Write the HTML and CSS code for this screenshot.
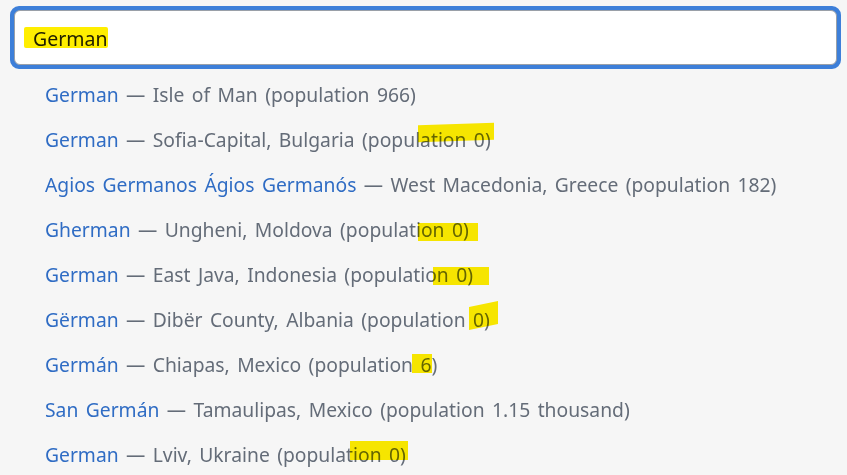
FILE: index.html
```html
<!DOCTYPE html>
<html>
<head>
<meta charset="utf-8">
<link rel="stylesheet" href="styles.css">
</head>
<body>
<div class="page">
  <div class="search">
    <div class="field"><span class="query">German</span></div>
  </div>
  <ul class="results">
    <li><span class="name">German</span> — Isle of Man (population 966)</li>
    <li><span class="name">German</span> — Sofia-Capital, Bulgaria (population 0)</li>
    <li><span class="name">Agios Germanos Ágios Germanós</span> — West Macedonia, Greece (population 182)</li>
    <li><span class="name">Gherman</span> — Ungheni, Moldova (population 0)</li>
    <li><span class="name">German</span> — East Java, Indonesia (population 0)</li>
    <li><span class="name">Gërman</span> — Dibër County, Albania (population 0)</li>
    <li><span class="name">Germán</span> — Chiapas, Mexico (population 6)</li>
    <li><span class="name">San Germán</span> — Tamaulipas, Mexico (population 1.15 thousand)</li>
    <li><span class="name">German</span> — Lviv, Ukraine (population 0)</li>
  </ul>
  <span class="mark m1"></span>
  <span class="mark m2"></span>
  <span class="mark m3"></span>
  <span class="mark m4"></span>
  <span class="mark m5"></span>
  <span class="mark m6"></span>
  <span class="mark m7"></span>
</div>
</body>
</html>
```

FILE: styles.css
```css
html, body {
  margin: 0;
  padding: 0;
  background: #f6f6f6;
}
.page {
  position: relative;
  width: 847px;
  height: 475px;
  overflow: hidden;
  padding: 6px 6px 0 10px;
  box-sizing: border-box;
  font-family: "Noto Sans", "Open Sans", sans-serif;
}
.search {
  width: 831px;
  height: 63px;
  box-sizing: border-box;
  border: 3px solid #3d7fd9;
  border-radius: 9px;
  padding: 1px;
  background: #3d7fd9;
}
.field {
  height: 100%;
  box-sizing: border-box;
  background: #fff;
  border: 1px solid #9aa0a8;
  border-radius: 6px;
  display: flex;
  align-items: center;
  padding-left: 18px;
}
.query {
  font-size: 19.5px;
  color: #222;
  position: relative;
  top: 1px;
}
.results {
  list-style: none;
  margin: 0;
  padding: 13px 0 0 35px;
}
.results li {
  height: 45px;
  line-height: 26px;
  font-size: 19.3px;
  word-spacing: 2.4px;
  color: #646c78;
  white-space: nowrap;
}
.name {
  color: #2f6cc4;
}
.mark {
  position: absolute;
  background: #ffee00;
  mix-blend-mode: multiply;
}
.m1 { left: 24px; top: 27px; width: 84px; height: 21px; border-radius: 2px; }
.m2 { left: 418px; top: 124px; width: 76px; height: 17px; transform: skewY(-2deg); }
.m3 { left: 418px; top: 223px; width: 60px; height: 18px; }
.m4 { left: 433px; top: 267px; width: 56px; height: 18px; }
.m5 { left: 469px; top: 304px; width: 29px; height: 23px; transform: skewY(-12deg); }
.m6 { left: 412px; top: 354px; width: 20px; height: 19px; }
.m7 { left: 350px; top: 441px; width: 58px; height: 19px; }
```
